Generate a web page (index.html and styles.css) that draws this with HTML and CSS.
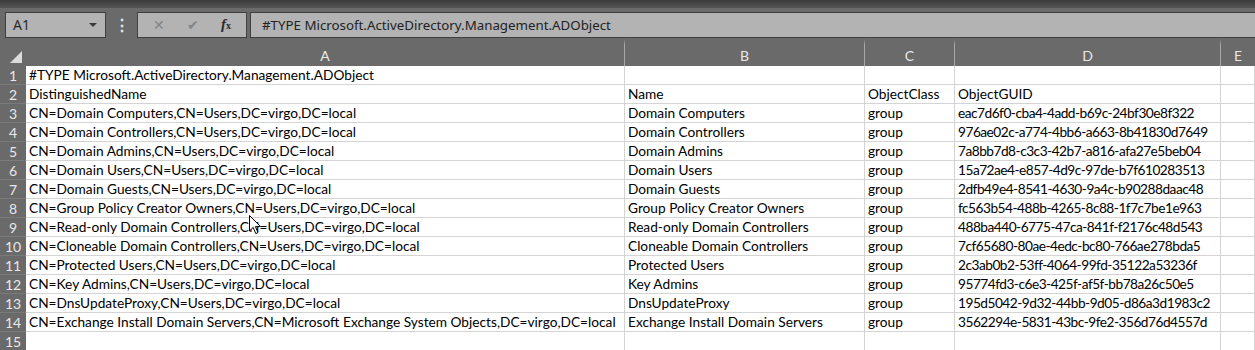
FILE: index.html
```html
<!DOCTYPE html>
<html>
<head>
    <meta charset="UTF-8">
    <title>ADGroups.csv - Excel</title>
    <link rel="stylesheet" href="styles.css">
</head>
<body>
    <div class="app">
        <div class="topband"></div>

        <!-- Formula bar -->
        <div class="formula-row">
            <div class="name-box">
                <span>A1</span>
                <span class="drop"></span>
            </div>
            <div class="grip">&#8942;</div>
            <div class="fx-box">
                <span class="fx-btn off">&#10005;</span>
                <span class="fx-btn off">&#10004;</span>
                <span class="fx-btn fx"><i>f</i><small>x</small></span>
            </div>
            <div class="formula">#TYPE Microsoft.ActiveDirectory.Management.ADObject</div>
        </div>

        <!-- Sheet -->
        <div class="sheet">
            <div class="hd corner"><span class="tri"></span></div>
            <div class="hd col">A</div>
            <div class="hd col">B</div>
            <div class="hd col">C</div>
            <div class="hd col">D</div>
            <div class="hd col last">E</div>

            <div class="hd row">1</div><div class="cell">#TYPE Microsoft.ActiveDirectory.Management.ADObject</div><div class="cell"></div><div class="cell"></div><div class="cell"></div><div class="cell"></div>
            <div class="hd row">2</div><div class="cell">DistinguishedName</div><div class="cell">Name</div><div class="cell">ObjectClass</div><div class="cell">ObjectGUID</div><div class="cell"></div>
            <div class="hd row">3</div><div class="cell">CN=Domain Computers,CN=Users,DC=virgo,DC=local</div><div class="cell">Domain Computers</div><div class="cell">group</div><div class="cell guid">eac7d6f0-cba4-4add-b69c-24bf30e8f322</div><div class="cell"></div>
            <div class="hd row">4</div><div class="cell">CN=Domain Controllers,CN=Users,DC=virgo,DC=local</div><div class="cell">Domain Controllers</div><div class="cell">group</div><div class="cell guid">976ae02c-a774-4bb6-a663-8b41830d7649</div><div class="cell"></div>
            <div class="hd row">5</div><div class="cell">CN=Domain Admins,CN=Users,DC=virgo,DC=local</div><div class="cell">Domain Admins</div><div class="cell">group</div><div class="cell guid">7a8bb7d8-c3c3-42b7-a816-afa27e5beb04</div><div class="cell"></div>
            <div class="hd row">6</div><div class="cell">CN=Domain Users,CN=Users,DC=virgo,DC=local</div><div class="cell">Domain Users</div><div class="cell">group</div><div class="cell guid">15a72ae4-e857-4d9c-97de-b7f610283513</div><div class="cell"></div>
            <div class="hd row">7</div><div class="cell">CN=Domain Guests,CN=Users,DC=virgo,DC=local</div><div class="cell">Domain Guests</div><div class="cell">group</div><div class="cell guid">2dfb49e4-8541-4630-9a4c-b90288daac48</div><div class="cell"></div>
            <div class="hd row">8</div><div class="cell">CN=Group Policy Creator Owners,CN=Users,DC=virgo,DC=local</div><div class="cell">Group Policy Creator Owners</div><div class="cell">group</div><div class="cell guid">fc563b54-488b-4265-8c88-1f7c7be1e963</div><div class="cell"></div>
            <div class="hd row">9</div><div class="cell">CN=Read-only Domain Controllers,CN=Users,DC=virgo,DC=local</div><div class="cell">Read-only Domain Controllers</div><div class="cell">group</div><div class="cell guid">488ba440-6775-47ca-841f-f2176c48d543</div><div class="cell"></div>
            <div class="hd row">10</div><div class="cell">CN=Cloneable Domain Controllers,CN=Users,DC=virgo,DC=local</div><div class="cell">Cloneable Domain Controllers</div><div class="cell">group</div><div class="cell guid">7cf65680-80ae-4edc-bc80-766ae278bda5</div><div class="cell"></div>
            <div class="hd row">11</div><div class="cell">CN=Protected Users,CN=Users,DC=virgo,DC=local</div><div class="cell">Protected Users</div><div class="cell">group</div><div class="cell guid">2c3ab0b2-53ff-4064-99fd-35122a53236f</div><div class="cell"></div>
            <div class="hd row">12</div><div class="cell">CN=Key Admins,CN=Users,DC=virgo,DC=local</div><div class="cell">Key Admins</div><div class="cell">group</div><div class="cell guid">95774fd3-c6e3-425f-af5f-bb78a26c50e5</div><div class="cell"></div>
            <div class="hd row">13</div><div class="cell">CN=DnsUpdateProxy,CN=Users,DC=virgo,DC=local</div><div class="cell">DnsUpdateProxy</div><div class="cell">group</div><div class="cell guid">195d5042-9d32-44bb-9d05-d86a3d1983c2</div><div class="cell"></div>
            <div class="hd row">14</div><div class="cell">CN=Exchange Install Domain Servers,CN=Microsoft Exchange System Objects,DC=virgo,DC=local</div><div class="cell">Exchange Install Domain Servers</div><div class="cell">group</div><div class="cell guid">3562294e-5831-43bc-9fe2-356d76d4557d</div><div class="cell"></div>
            <div class="hd row">15</div><div class="cell"></div><div class="cell"></div><div class="cell"></div><div class="cell"></div><div class="cell"></div>
        </div>

        <!-- mouse pointer -->
        <svg class="pointer" width="13" height="20" viewBox="0 0 13 20">
            <path d="M0.5 0.5 L0.5 16 L4.2 12.4 L6.8 18.6 L9 17.6 L6.4 11.6 L11.5 11.6 Z" fill="#fff" stroke="#000" stroke-width="1"/>
        </svg>
    </div>
</body>
</html>
```

FILE: styles.css
```css
body {
    margin: 0;
    padding: 0;
    background-color: #ffffff;
    font-family: Lato, "Open Sans", sans-serif;
    overflow: hidden;
}

.app {
    position: relative;
    width: 1255px;
    height: 350px;
    overflow: hidden;
}

.topband {
    height: 8px;
    background: linear-gradient(#3a3a3a, #555555);
}

.formula-row {
    display: flex;
    align-items: center;
    height: 31px;
    padding: 2px 0 0 5px;
    background-color: #6a6a6a;
    box-sizing: border-box;
}

.name-box {
    display: flex;
    align-items: center;
    justify-content: space-between;
    width: 101px;
    height: 26px;
    padding: 0 8px 0 7px;
    box-sizing: border-box;
    background-color: #b3b3b3;
    border: 1px solid #3f3f3f;
    font-family: "Noto Sans", sans-serif;
    font-size: 14px;
    color: #2a2a2a;
}

.drop {
    width: 0;
    height: 0;
    border-left: 4px solid transparent;
    border-right: 4px solid transparent;
    border-top: 4px solid #3a3a3a;
}

.grip {
    width: 31px;
    text-align: center;
    color: #e6e6e6;
    font-size: 16px;
    font-weight: bold;
}

.fx-box {
    display: flex;
    align-items: center;
    justify-content: space-around;
    width: 110px;
    height: 26px;
    padding: 0 4px;
    box-sizing: border-box;
    background-color: #b3b3b3;
    border: 1px solid #3f3f3f;
}

.fx-btn {
    font-size: 14px;
    color: #858585;
}

.fx-btn.fx {
    color: #2b2b2b;
    font-family: "Liberation Serif", serif;
    font-size: 15px;
    font-weight: bold;
}

.fx-btn.fx small {
    font-size: 10px;
}

.formula {
    flex: 1;
    height: 26px;
    margin-left: 3px;
    padding-left: 11px;
    box-sizing: border-box;
    background-color: #b3b3b3;
    border: 1px solid #3f3f3f;
    border-right: none;
    font-family: "Noto Sans", sans-serif;
    font-size: 13.3px;
    line-height: 24px;
    color: #222;
}

.sheet {
    display: grid;
    grid-template-columns: 26px 599px 240px 90px 266px 1fr;
    grid-template-rows: 27px;
    grid-auto-rows: 19px;
    background-color: #6a6a6a;
}

.hd {
    background-color: #6a6a6a;
    color: #e8e8e8;
    font-size: 14px;
    box-sizing: border-box;
}

.corner {
    position: relative;
}

.tri {
    position: absolute;
    right: 4px;
    bottom: 3px;
    width: 0;
    height: 0;
    border-left: 12px solid transparent;
    border-bottom: 12px solid #dcdcdc;
}

.col {
    display: flex;
    align-items: flex-end;
    justify-content: center;
    padding-bottom: 2px;
    border-right: 1px solid #a8a8a8;
    border-top: 6px solid #6a6a6a;
}

.col.last {
    border-right: none;
}

.row {
    display: flex;
    align-items: center;
    justify-content: center;
    border-bottom: 1px solid #7a7a7a;
}

.cell {
    background-color: #ffffff;
    border-right: 1px solid #d4d4d4;
    border-bottom: 1px solid #d4d4d4;
    box-sizing: border-box;
    padding: 0 3px;
    font-size: 13.7px;
    line-height: 18px;
    color: #000;
    white-space: nowrap;
    overflow: visible;
}

.guid {
    letter-spacing: -0.5px;
}

.pointer {
    position: absolute;
    left: 249px;
    top: 215px;
}
```
